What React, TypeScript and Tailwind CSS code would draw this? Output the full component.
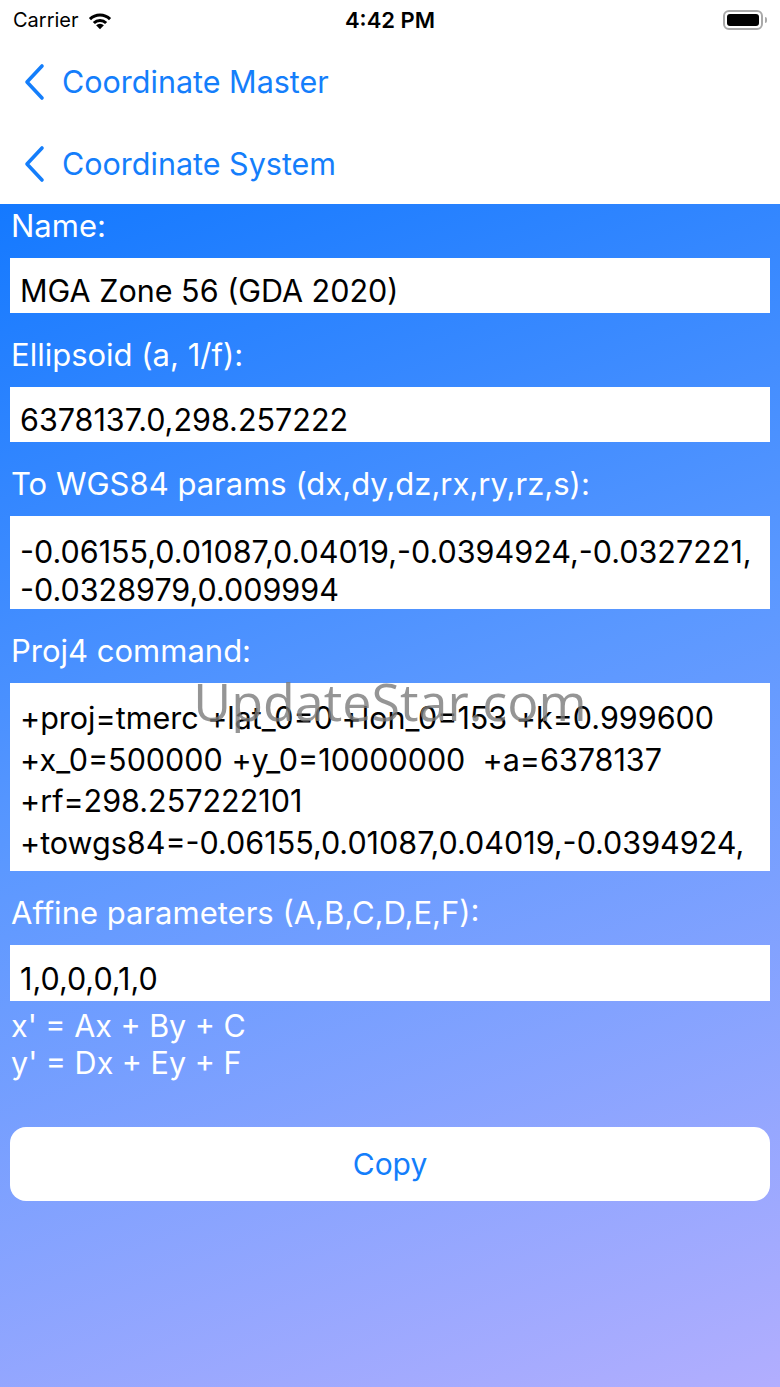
const font = { fontFamily: "Inter, Roboto, 'Liberation Sans', sans-serif" };

function Chevron() {
  return (
    <svg width="22" height="38" viewBox="0 0 22 38" className="shrink-0">
      <polyline points="19,3 4,19 19,35" fill="none" stroke="#147efb" strokeWidth="3.6" strokeLinecap="round" strokeLinejoin="round" />
    </svg>
  );
}

function Field({ label, children, box }: { label: string; children: React.ReactNode; box: string }) {
  return (
    <div>
      <div className="h-[54px] pl-[11px] pt-[2px] text-[31px] leading-[40px] text-white whitespace-nowrap">{label}</div>
      <div className={`mx-[10px] bg-white pl-[10px] text-[30.5px] text-black ${box}`}>{children}</div>
    </div>
  );
}

export default function App() {
  return (
    <div style={font} className="w-[780px] h-[1387px] overflow-hidden flex flex-col bg-white">
      {/* status bar */}
      <div className="h-[40px] shrink-0 flex items-center justify-between px-[13px] text-[20px] text-black">
        <div className="flex items-center gap-[8px] w-[200px]">
          <span>Carrier</span>
          <svg width="26" height="19" viewBox="0 0 22 16">
            <path d="M11 15.5 L7.7 12 A4.8 4.8 0 0 1 14.3 12 Z" fill="black" />
            <path d="M4.9 9.2 A8.8 8.8 0 0 1 17.1 9.2 L15.3 11 A6.3 6.3 0 0 0 6.7 11 Z" fill="black" />
            <path d="M1.6 5.9 A13.4 13.4 0 0 1 20.4 5.9 L18.6 7.7 A10.8 10.8 0 0 0 3.4 7.7 Z" fill="black" />
          </svg>
        </div>
        <span className="text-[22px] font-semibold">4:42 PM</span>
        <div className="w-[200px] flex justify-end">
          <div className="flex items-center gap-[2px]">
            <div className="w-[40px] h-[20px] rounded-[6px] border-2 border-[#a9a9a9] p-[2px]">
              <div className="w-full h-full rounded-[3px] bg-black" />
            </div>
            <div className="w-[2px] h-[6px] rounded-r bg-[#a9a9a9]" />
          </div>
        </div>
      </div>

      {/* nav rows */}
      <div className="h-[83px] shrink-0 flex items-center pl-[23px] text-[#147efb]">
        <Chevron />
        <span className="ml-[17px] text-[30.5px]">Coordinate Master</span>
      </div>
      <div className="h-[81px] shrink-0 flex items-center pl-[23px] text-[#147efb]">
        <Chevron />
        <span className="ml-[17px] text-[30.5px]">Coordinate System</span>
      </div>

      {/* content */}
      <div className="relative flex-1 bg-[linear-gradient(160deg,#1479ff_0%,#5b98ff_45%,#b2aefe_100%)]">
        <Field label="Name:" box="h-[55px] flex items-center pt-[10px]">
          MGA Zone 56 (GDA 2020)
        </Field>
        <div className="h-[20px]" />
        <Field label="Ellipsoid (a, 1/f):" box="h-[55px] flex items-center pt-[10px]">
          6378137.0,298.257222
        </Field>
        <div className="h-[20px]" />
        <Field label="To WGS84 params (dx,dy,dz,rx,ry,rz,s):" box="h-[93px] pt-[17px] leading-[38px] whitespace-nowrap">
          <div>-0.06155,0.01087,0.04019,-0.0394924,-0.0327221,</div>
          <div>-0.0328979,0.009994</div>
        </Field>
        <div className="h-[20px]" />
        <Field label="Proj4 command:" box="h-[188px] pt-[14px] leading-[41.5px] overflow-hidden whitespace-nowrap">
          <div>+proj=tmerc +lat_0=0 +lon_0=153 +k=0.999600</div>
          <div>+x_0=500000 +y_0=10000000&nbsp; +a=6378137</div>
          <div>+rf=298.257222101</div>
          <div>+towgs84=-0.06155,0.01087,0.04019,-0.0394924,</div>
        </Field>
        <div className="h-[20px]" />
        <Field label="Affine parameters (A,B,C,D,E,F):" box="h-[56px] flex items-center pt-[12px]">
          1,0,0,0,1,0
        </Field>
        <div className="pl-[11px] pt-[6px] text-[30.5px] leading-[37px] text-white">
          <div>x' = Ax + By + C</div>
          <div>y' = Dx + Ey + F</div>
        </div>

        <div className="mx-[10px] mt-[46px] h-[74px] rounded-[16px] bg-white flex items-center justify-center text-[30px] text-[#147efb]">
          Copy
        </div>

        {/* watermark */}
        <div className="absolute left-0 right-0 top-[458px] text-center text-[52px] text-[#7a7a7a]/80 pointer-events-none" style={{ fontFamily: "'Open Sans', sans-serif" }}>
          UpdateStar.com
        </div>
      </div>
    </div>
  );
}
